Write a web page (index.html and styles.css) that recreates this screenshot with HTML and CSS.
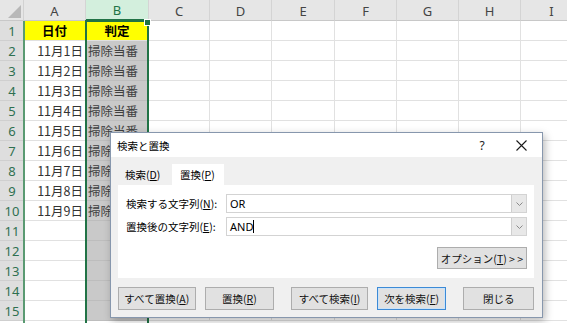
FILE: index.html
```html
<!DOCTYPE html>
<html lang="ja">
<head>
<meta charset="utf-8">
<title>検索と置換</title>
<link rel="stylesheet" href="styles.css">
</head>
<body>
<div class="app">
  <div class="sheet">
    <div class="corner"><span class="tri"></span></div>
    <div class="ch">A</div><div class="ch sel">B</div><div class="ch">C</div><div class="ch">D</div><div class="ch">E</div><div class="ch">F</div><div class="ch">G</div><div class="ch">H</div><div class="ch">I</div>

    <div class="rh">1</div><div class="c yellow hd">日付</div><div class="c yellow hd">判定</div><div class="c"></div><div class="c"></div><div class="c"></div><div class="c"></div><div class="c"></div><div class="c"></div><div class="c"></div>
    <div class="rh">2</div><div class="c num">11月1日</div><div class="c s txt">掃除当番</div><div class="c"></div><div class="c"></div><div class="c"></div><div class="c"></div><div class="c"></div><div class="c"></div><div class="c"></div>
    <div class="rh">3</div><div class="c num">11月2日</div><div class="c s txt">掃除当番</div><div class="c"></div><div class="c"></div><div class="c"></div><div class="c"></div><div class="c"></div><div class="c"></div><div class="c"></div>
    <div class="rh">4</div><div class="c num">11月3日</div><div class="c s txt">掃除当番</div><div class="c"></div><div class="c"></div><div class="c"></div><div class="c"></div><div class="c"></div><div class="c"></div><div class="c"></div>
    <div class="rh">5</div><div class="c num">11月4日</div><div class="c s txt">掃除当番</div><div class="c"></div><div class="c"></div><div class="c"></div><div class="c"></div><div class="c"></div><div class="c"></div><div class="c"></div>
    <div class="rh">6</div><div class="c num">11月5日</div><div class="c s txt">掃除当番</div><div class="c"></div><div class="c"></div><div class="c"></div><div class="c"></div><div class="c"></div><div class="c"></div><div class="c"></div>
    <div class="rh">7</div><div class="c num">11月6日</div><div class="c s txt">掃除当番</div><div class="c"></div><div class="c"></div><div class="c"></div><div class="c"></div><div class="c"></div><div class="c"></div><div class="c"></div>
    <div class="rh">8</div><div class="c num">11月7日</div><div class="c s txt">掃除当番</div><div class="c"></div><div class="c"></div><div class="c"></div><div class="c"></div><div class="c"></div><div class="c"></div><div class="c"></div>
    <div class="rh">9</div><div class="c num">11月8日</div><div class="c s txt">掃除当番</div><div class="c"></div><div class="c"></div><div class="c"></div><div class="c"></div><div class="c"></div><div class="c"></div><div class="c"></div>
    <div class="rh">10</div><div class="c num">11月9日</div><div class="c s txt">掃除当番</div><div class="c"></div><div class="c"></div><div class="c"></div><div class="c"></div><div class="c"></div><div class="c"></div><div class="c"></div>
    <div class="rh">11</div><div class="c"></div><div class="c s"></div><div class="c"></div><div class="c"></div><div class="c"></div><div class="c"></div><div class="c"></div><div class="c"></div><div class="c"></div>
    <div class="rh">12</div><div class="c"></div><div class="c s"></div><div class="c"></div><div class="c"></div><div class="c"></div><div class="c"></div><div class="c"></div><div class="c"></div><div class="c"></div>
    <div class="rh">13</div><div class="c"></div><div class="c s"></div><div class="c"></div><div class="c"></div><div class="c"></div><div class="c"></div><div class="c"></div><div class="c"></div><div class="c"></div>
    <div class="rh">14</div><div class="c"></div><div class="c s"></div><div class="c"></div><div class="c"></div><div class="c"></div><div class="c"></div><div class="c"></div><div class="c"></div><div class="c"></div>
    <div class="rh">15</div><div class="c"></div><div class="c s"></div><div class="c"></div><div class="c"></div><div class="c"></div><div class="c"></div><div class="c"></div><div class="c"></div><div class="c"></div>
  </div>

  <div class="rowedge"></div>
  <div class="selection"><span class="handle"></span></div>

  <div class="dialog">
    <div class="titlebar">
      <span class="title">検索と置換</span>
      <span class="help">?</span>
      <span class="close"><svg width="11" height="11" viewBox="0 0 11 11"><path d="M0.5 0.5 L10.5 10.5 M10.5 0.5 L0.5 10.5" stroke="#1a1a1a" stroke-width="1.1" fill="none"/></svg></span>
    </div>
    <div class="body">
      <div class="tabs">
        <span class="tab">検索(<u>D</u>)</span>
        <span class="tab active">置換(<u>P</u>)</span>
      </div>
      <div class="panel">
        <div class="field">
          <span class="label">検索する文字列(<u>N</u>):</span>
          <span class="combo"><span class="value">OR</span><span class="drop"><svg width="7" height="4" viewBox="0 0 7 4"><path d="M0.5 0.5 L3.5 3.5 L6.5 0.5" stroke="#8a8a8a" fill="none"/></svg></span></span>
        </div>
        <div class="field">
          <span class="label">置換後の文字列(<u>E</u>):</span>
          <span class="combo"><span class="value">AND<span class="caret"></span></span><span class="drop"><svg width="7" height="4" viewBox="0 0 7 4"><path d="M0.5 0.5 L3.5 3.5 L6.5 0.5" stroke="#8a8a8a" fill="none"/></svg></span></span>
        </div>
        <div class="optrow">
          <span class="btn opt">オプション(<u>T</u>) &gt; &gt;</span>
        </div>
      </div>
      <div class="buttons">
        <span class="btn b1">すべて置換(<u>A</u>)</span>
        <span class="btn b2">置換(<u>R</u>)</span>
        <span class="btn b3">すべて検索(<u>I</u>)</span>
        <span class="btn b4 default">次を検索(<u>F</u>)</span>
        <span class="btn b5">閉じる</span>
      </div>
    </div>
  </div>
</div>
</body>
</html>
```

FILE: styles.css
```css
html, body {
  margin: 0;
  padding: 0;
  background: #ffffff;
  overflow: hidden;
}

.app {
  position: relative;
  width: 567px;
  height: 323px;
  overflow: hidden;
  font-family: "Noto Sans CJK JP", "Noto Sans", sans-serif;
}

.sheet {
  display: grid;
  grid-template-columns: 24px 62px 63px 61px 62px 63px 62px 62px 62px 62px;
  grid-template-rows: 21px repeat(15, 20px);
}

.sheet > div {
  box-sizing: border-box;
}

.corner {
  position: relative;
  background: #e6e6e6;
  border-right: 1px solid #d2d2d2;
  border-bottom: 1px solid #c8c8c8;
}

.tri {
  position: absolute;
  right: 2px;
  bottom: 2px;
  width: 0;
  height: 0;
  border-left: 13px solid transparent;
  border-bottom: 13px solid #b8b8b8;
}

.ch {
  background: #e6e6e6;
  border-right: 1px solid #d4d4d4;
  border-bottom: 1px solid #c8c8c8;
  color: #444444;
  font-family: "Noto Sans", sans-serif;
  font-size: 13px;
  display: flex;
  align-items: center;
  justify-content: center;
  padding-top: 1px;
}

.ch.sel {
  background: #d3efdd;
  color: #217346;
  border-bottom: 2px solid #217346;
}

.rh {
  background: #dedede;
  border-bottom: 1px solid #cfcfcf;
  color: #2e7050;
  font-family: "Noto Sans", sans-serif;
  font-size: 13px;
  display: flex;
  align-items: center;
  justify-content: center;
}

.c {
  border-right: 1px solid #e1e1e1;
  border-bottom: 1px solid #e1e1e1;
  font-size: 12.5px;
  color: #333333;
  display: flex;
  align-items: center;
  white-space: nowrap;
  overflow: hidden;
}

.yellow {
  background: #ffff00;
}

.hd {
  justify-content: center;
  font-weight: bold;
  color: #000000;
}

.num {
  justify-content: flex-end;
  padding-right: 2px;
}

.s {
  background: #c9c9c9;
  border-bottom-color: #bdbdbd;
}

.txt {
  padding-left: 2px;
  color: #404040;
}

.rowedge {
  position: absolute;
  left: 23px;
  top: 21px;
  width: 2px;
  height: 302px;
  background: #5a9a72;
}

.selection {
  position: absolute;
  left: 85px;
  top: 20px;
  width: 64px;
  height: 310px;
  border: 2px solid #217346;
  box-sizing: border-box;
}

.handle {
  position: absolute;
  right: -4px;
  top: -3px;
  width: 5px;
  height: 5px;
  background: #217346;
  border: 1px solid #ffffff;
}

/* dialog */
.dialog {
  position: absolute;
  left: 110px;
  top: 132px;
  width: 433px;
  height: 186px;
  box-sizing: border-box;
  border: 1px solid #8797ad;
  background: #f0f0f0;
  box-shadow: 2px 3px 8px rgba(0, 0, 0, 0.28);
  display: flex;
  flex-direction: column;
  font-size: 10.5px;
  color: #000000;
}

.titlebar {
  height: 24px;
  background: #ffffff;
  display: flex;
  align-items: center;
  padding-left: 6px;
}

.title {
  flex: 1;
  font-size: 10.5px;
}

.help {
  width: 28px;
  text-align: center;
  font-family: "Noto Sans", sans-serif;
  font-size: 12px;
  color: #222;
}

.close {
  width: 34px;
  margin-left: 8px;
  margin-right: 4px;
  display: flex;
  justify-content: center;
  align-items: center;
}

.body {
  flex: 1;
  display: flex;
  flex-direction: column;
  padding: 7px 8px 0 7px;
}

.tabs {
  height: 21px;
  display: flex;
  align-items: stretch;
}

.tab {
  display: flex;
  align-items: center;
  justify-content: flex-start;
  padding-left: 7px;
  width: 54px;
  box-sizing: border-box;
}

.tab.active {
  width: 52px;
  padding-left: 8px;
  background: #ffffff;
}

.panel {
  height: 93px;
  box-sizing: border-box;
  background: #ffffff;
  padding: 9px 7px 0 8px;
  display: flex;
  flex-direction: column;
}

.field {
  display: flex;
  align-items: center;
  height: 19px;
  margin-bottom: 4px;
}

.label {
  width: 100px;
  white-space: nowrap;
}

.combo {
  flex: 1;
  height: 19px;
  box-sizing: border-box;
  border: 1px solid #d3d3d3;
  display: flex;
  align-items: center;
}

.value {
  flex: 1;
  padding-left: 3px;
  font-family: "Noto Sans", sans-serif;
  font-size: 11px;
  display: flex;
  align-items: center;
}

.caret {
  display: inline-block;
  width: 1px;
  height: 13px;
  background: #000;
}

.drop {
  width: 15px;
  height: 17px;
  box-sizing: border-box;
  background: #e8e8e8;
  border-left: 1px solid #cfcfcf;
  display: flex;
  justify-content: center;
  align-items: center;
}

.optrow {
  display: flex;
  justify-content: flex-end;
  margin-top: 7px;
}

.btn {
  height: 22px;
  box-sizing: border-box;
  background: #e1e1e1;
  border: 1px solid #adadad;
  display: flex;
  align-items: center;
  justify-content: center;
  white-space: nowrap;
  color: #111;
}

.opt {
  width: 90px;
}

.buttons {
  display: flex;
  margin-top: 9px;
  height: 23px;
}

.buttons .btn {
  height: 23px;
}

.b1 { width: 78px; }
.b2 { width: 70px; margin-left: 9px; }
.b3 { width: 77px; margin-left: 17px; }
.b4 { width: 70px; margin-left: 9px; }
.b5 { width: 71px; margin-left: 17px; }

.default {
  border: 1px solid #3c8ad6;
  box-shadow: inset 0 0 0 1px #cde3f7;
}

u {
  text-decoration: underline;
  text-underline-offset: 1px;
}
```
